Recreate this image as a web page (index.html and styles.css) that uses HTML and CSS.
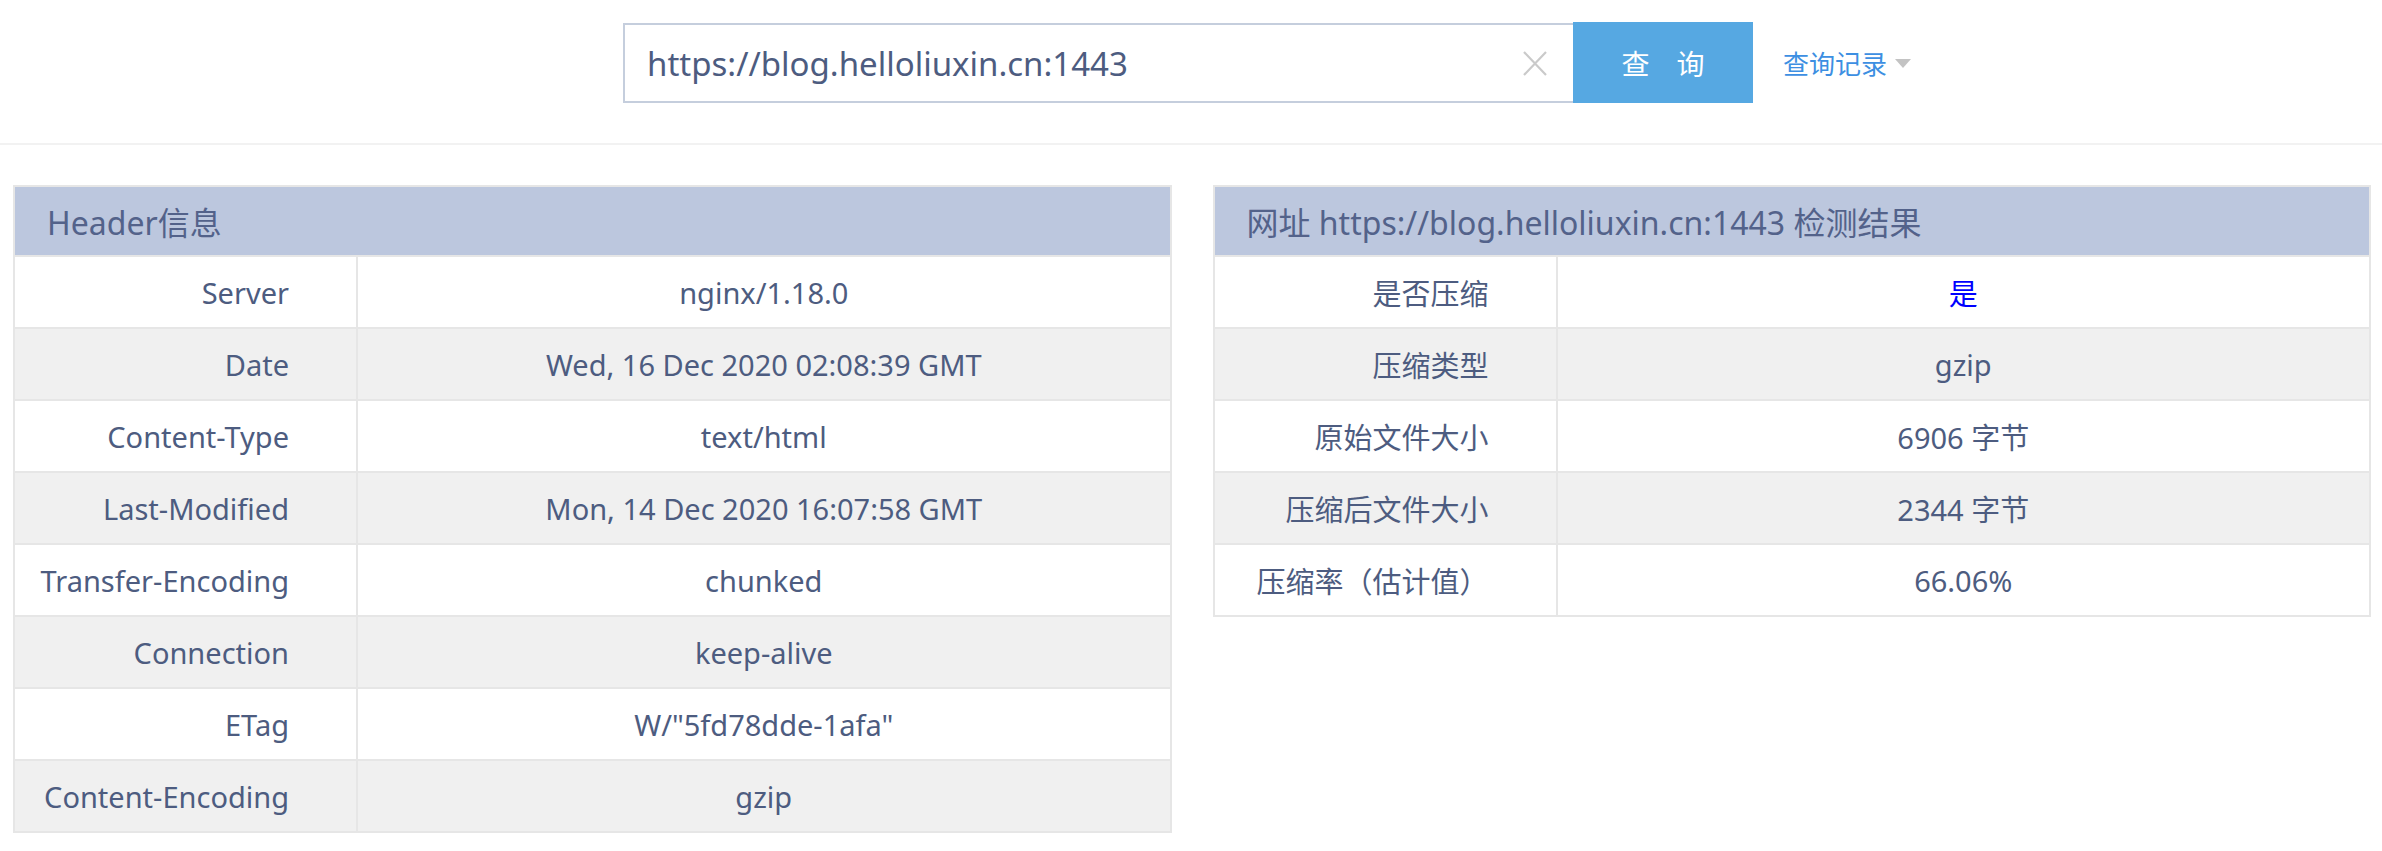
FILE: index.html
```html
<!DOCTYPE html>
<html lang="zh-CN">
<head>
<meta charset="utf-8">
<title>Gzip 压缩检测</title>
<link rel="stylesheet" href="styles.css">
</head>
<body>
<div class="topbar">
  <div class="search">
    <div class="search-box">
      <span class="search-text">https://blog.helloliuxin.cn:1443</span>
      <svg class="clear" width="24" height="25" viewBox="0 0 24 25"><path d="M1 1 L23 24 M23 1 L1 24" stroke="#cacaca" stroke-width="2.2" fill="none"/></svg>
    </div>
    <div class="search-btn">查询</div>
  </div>
  <div class="history">查询记录<span class="caret"></span></div>
</div>

<div class="panels">
  <div class="panel">
    <div class="panel-head">Header信息</div>
    <div class="row"><div class="label">Server</div><div class="value">nginx/1.18.0</div></div>
    <div class="row alt"><div class="label">Date</div><div class="value">Wed, 16 Dec 2020 02:08:39 GMT</div></div>
    <div class="row"><div class="label">Content-Type</div><div class="value">text/html</div></div>
    <div class="row alt"><div class="label">Last-Modified</div><div class="value">Mon, 14 Dec 2020 16:07:58 GMT</div></div>
    <div class="row"><div class="label">Transfer-Encoding</div><div class="value">chunked</div></div>
    <div class="row alt"><div class="label">Connection</div><div class="value">keep-alive</div></div>
    <div class="row"><div class="label">ETag</div><div class="value">W/"5fd78dde-1afa"</div></div>
    <div class="row alt"><div class="label">Content-Encoding</div><div class="value">gzip</div></div>
  </div>
  <div class="panel">
    <div class="panel-head">网址 https://blog.helloliuxin.cn:1443 检测结果</div>
    <div class="row"><div class="label">是否压缩</div><div class="value"><span class="yes">是</span></div></div>
    <div class="row alt"><div class="label">压缩类型</div><div class="value">gzip</div></div>
    <div class="row"><div class="label">原始文件大小</div><div class="value">6906 字节</div></div>
    <div class="row alt"><div class="label">压缩后文件大小</div><div class="value">2344 字节</div></div>
    <div class="row"><div class="label">压缩率（估计值）</div><div class="value">66.06%</div></div>
  </div>
</div>
</body>
</html>
```
FILE: styles.css
```css
* { box-sizing: border-box; }
html, body { margin: 0; padding: 0; background: #fff; }
body {
  font-family: "Noto Sans", "Noto Sans CJK SC", sans-serif;
  color: #4d5c80;
}

.topbar {
  display: grid;
  grid-template-columns: 1fr auto 1fr;
  padding: 22px 6px 0 0;
  height: 145px;
  border-bottom: 2px solid #f2f2f2;
}
.search {
  grid-column: 2;
  display: flex;
  align-items: flex-end;
  height: 81px;
}
.search-box {
  width: 950px;
  height: 80px;
  border: 2px solid #c5cedd;
  border-right: none;
  display: flex;
  align-items: center;
  padding-left: 22px;
}
.search-text {
  flex: 1;
  font-size: 33px;
  color: #4d5c80;
  white-space: nowrap;
}
.clear { margin-right: 26px; }
.search-btn {
  width: 180px;
  height: 81px;
  background: #56a8e2;
  color: #fff;
  font-size: 28px;
  display: flex;
  align-items: center;
  justify-content: center;
  letter-spacing: 27px;
  padding-left: 27px;
}
.history {
  grid-column: 3;
  justify-self: start;
  align-self: start;
  margin-top: 22px;
  margin-left: 30px;
  font-size: 26px;
  color: #3d8fe2;
  display: flex;
  align-items: center;
}
.caret {
  width: 0;
  height: 0;
  margin-left: 8px;
  border-left: 8px solid transparent;
  border-right: 8px solid transparent;
  border-top: 9px solid #c3c3c3;
}

.panels {
  display: grid;
  grid-template-columns: 1fr 1fr;
  gap: 41px;
  padding: 0 11px 0 13px;
  margin-top: 40px;
  align-items: start;
}
.panel {
  border: 2px solid #e6e6e6;
}
.panel-head {
  height: 68px;
  background: #bcc7de;
  display: flex;
  align-items: center;
  padding-left: 32px;
  font-size: 32px;
  color: #53628a;
  white-space: nowrap;
}
.row {
  display: grid;
  grid-template-columns: 343px 1fr;
  height: 72px;
  border-top: 2px solid #e6e6e6;
  font-size: 29px;
}
.row.alt { background: #f0f0f0; }
.label {
  border-right: 2px solid #e6e6e6;
  padding-right: 67px;
  display: flex;
  align-items: center;
  justify-content: flex-end;
  white-space: nowrap;
}
.value {
  display: flex;
  align-items: center;
  justify-content: center;
  white-space: nowrap;
}
.yes { color: #0000ff; }
```
